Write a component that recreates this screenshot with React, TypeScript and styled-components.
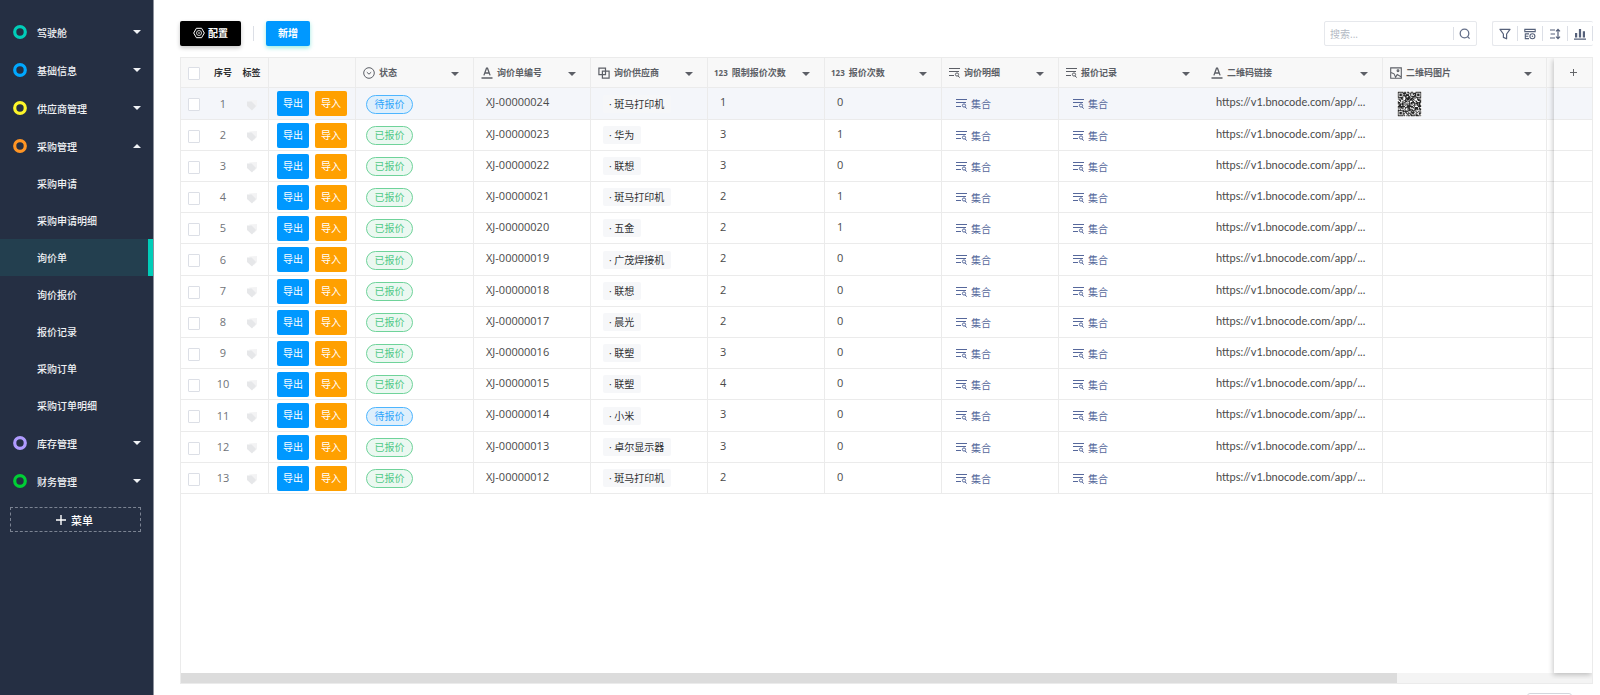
import React from "react";
import styled, { createGlobalStyle } from "styled-components";

const LINE = "#ebebeb";

const GlobalStyle = createGlobalStyle`
  *, *::before, *::after { box-sizing: border-box; }
  body {
    margin: 0;
    background: #fff;
    color: #4a4a4a;
    font-family: "Open Sans", "Noto Sans CJK SC", sans-serif;
    font-size: 10px;
  }
  button, input { font-family: inherit; }
`;

const Page = styled.div`
  display: flex;
  height: 100vh;
  overflow: hidden;
`;

/* ---------- sidebar ---------- */

const Sidebar = styled.nav`
  flex: 0 0 154px;
  padding-top: 13px;
  background: #252f43;
  border-right: 1px solid #8d929d;
  display: flex;
  flex-direction: column;
`;

const MenuItem = styled.a<{ $sub?: boolean; $active?: boolean }>`
  display: flex;
  align-items: center;
  height: ${(p) => (p.$sub ? 37 : 38)}px;
  padding: 0 12px 0 ${(p) => (p.$sub ? 37 : 13)}px;
  color: #f0f2f5;
  font-size: 10px;
  font-weight: 500;
  text-decoration: none;
  background: ${(p) => (p.$active ? "#233f4f" : "transparent")};
  box-shadow: ${(p) => (p.$active ? "inset -5px 0 0 #00cdb8" : "none")};
`;

const MenuLabel = styled.span`
  flex: 1;
`;

const RingIcon = styled.svg`
  width: 14px;
  height: 14px;
  margin-right: 10px;
`;

const AddMenu = styled.button`
  display: flex;
  align-items: center;
  justify-content: center;
  gap: 5px;
  height: 25px;
  margin: 7px 12px 0 10px;
  padding: 0 2px 0 0;
  border: 1px dashed #7b8392;
  background: none;
  color: #fff;
  font-size: 11px;
  font-weight: 500;
`;

/* ---------- toolbar ---------- */

const Main = styled.main`
  flex: 1;
  min-width: 0;
  display: flex;
  flex-direction: column;
  padding: 21px 7px 0 26px;
`;

const Toolbar = styled.div`
  display: flex;
  align-items: center;
  height: 25px;
  margin-bottom: 11px;
`;

const ToolbarButton = styled.button<{ $dark?: boolean }>`
  display: flex;
  align-items: center;
  justify-content: center;
  gap: 3px;
  height: 25px;
  padding: 0 ${(p) => (p.$dark ? 13 : 12)}px 2px;
  border: 0;
  border-radius: 2px;
  background: ${(p) => (p.$dark ? "#000" : "#0098ff")};
  box-shadow: 0 2px 4px ${(p) => (p.$dark ? "rgba(0,0,0,.22)" : "rgba(0,205,184,.4)")};
  color: #fff;
  font-size: 10px;
  font-weight: 700;
`;

const ToolbarRule = styled.span`
  width: 1px;
  height: 15px;
  margin: 0 12px;
  background: #dcdfe6;
`;

const SearchBox = styled.form`
  display: flex;
  align-items: center;
  width: 153px;
  height: 25px;
  margin: 0 15px 0 auto;
  border: 1px solid #e6e8ec;
  border-radius: 2px;
`;

const SearchInput = styled.input`
  flex: 1;
  min-width: 0;
  padding: 0 5px;
  border: 0;
  outline: 0;
  background: none;
  font-size: 10px;
  &::placeholder { color: #b4bac4; opacity: 1; }
`;

const SearchButton = styled.button`
  display: flex;
  align-items: center;
  justify-content: center;
  width: 23px;
  height: 13px;
  padding: 0;
  border: 0;
  border-left: 1px solid #dcdfe6;
  background: none;
  color: #65708a;
`;

const ToolGroup = styled.div`
  display: flex;
  align-items: center;
  height: 25px;
  border: 1px solid #e6e8ec;
  border-right: 0;
  border-radius: 2px;
`;

const ToolButton = styled.button`
  display: flex;
  align-items: center;
  justify-content: center;
  width: 25px;
  height: 15px;
  padding: 0;
  border: 0;
  border-right: 1px solid #dcdfe6;
  background: none;
  color: #56617a;
`;

/* ---------- grid ---------- */

const Grid = styled.section`
  flex: 1;
  min-height: 0;
  display: flex;
  flex-direction: column;
  border: 1px solid ${LINE};
`;

const GridBody = styled.div`
  flex: 1;
  min-height: 0;
  display: flex;
`;

const ScrollPane = styled.div`
  flex: 1;
  min-width: 0;
  overflow: hidden;
`;

const FixedPane = styled.div`
  position: relative;
  flex: 0 0 38px;
  background: #fff;
  box-shadow: -1px 2px 5px rgba(0, 0, 0, 0.22);
  clip-path: inset(0 0 -6px -8px);
`;

const Table = styled.table<{ $overflow?: number }>`
  width: calc(100% + ${(p) => p.$overflow ?? 0}px);
  table-layout: fixed;
  border-collapse: separate;
  border-spacing: 0;
`;

const HeadCell = styled.th<{ $rule?: boolean; $center?: boolean; $dark?: boolean }>`
  height: 30px;
  padding: 0 ${(p) => (p.$center ? 0 : 14)}px 0 ${(p) => (p.$center ? 0 : 7)}px;
  border-bottom: 1px solid ${LINE};
  border-right: ${(p) => (p.$rule ? `1px solid ${LINE}` : "0")};
  background: #f8f8f8;
  color: ${(p) => (p.$dark ? "#303133" : "#5c5f66")};
  font-size: 9px;
  font-weight: 700;
  text-align: ${(p) => (p.$center ? "center" : "left")};
  white-space: nowrap;
`;

const HeadContent = styled.div`
  display: flex;
  align-items: center;
  gap: 4px;
`;

const HeadLabel = styled.span`
  flex: 1;
`;

const HeadCaret = styled.span`
  display: flex;
  padding-top: 3px;
`;

const NumberMark = styled.span`
  margin-left: -1px;
  font-size: 8px;
`;

const Row = styled.tr<{ $hover?: boolean }>`
  height: 31px;
  background: ${(p) => (p.$hover ? "#f4f6fa" : "#fff")};
  &:nth-child(5n + 1) { height: 32px; }
`;

const Cell = styled.td<{ $rule?: boolean; $center?: boolean }>`
  padding: 0 0 0 ${(p) => (p.$center ? 0 : 12)}px;
  border-bottom: 1px solid ${LINE};
  border-right: ${(p) => (p.$rule ? `1px solid ${LINE}` : "0")};
  text-align: ${(p) => (p.$center ? "center" : "left")};
  white-space: nowrap;
`;

const ValueText = styled.div`
  padding-bottom: 3px;
  font-size: 11px;
  line-height: 16px;
`;

const LinkText = styled.a`
  display: block;
  padding-bottom: 3px;
  color: inherit;
  font-family: Lato, "Open Sans", sans-serif;
  font-size: 11px;
  line-height: 16px;
  text-decoration: none;
`;

const SeqText = styled.span`
  color: #707378;
  font-size: 11px;
  line-height: 16px;
`;

const Checkbox = styled.input`
  appearance: none;
  display: block;
  width: 12px;
  height: 13px;
  margin: 2px 0 0 7px;
  border: 1px solid #dcdfe6;
  border-radius: 1px;
  background: #fff;
`;

const TagIcon = styled.svg`
  display: block;
  width: 12px;
  height: 12px;
  margin: 2px auto 0;
`;

const ActionBar = styled.div`
  display: flex;
  gap: 6px;
  margin-left: -4px;
`;

const ActionButton = styled.button<{ $orange?: boolean }>`
  width: 32px;
  height: 25px;
  padding: 0 0 2px;
  border: 0;
  border-radius: 2px;
  background: ${(p) => (p.$orange ? "#ffa000" : "#0098ff")};
  color: #fff;
  font-size: 10px;
`;

const StatusPill = styled.span<{ $pending: boolean }>`
  display: block;
  width: 47px;
  height: 19px;
  margin: 1px 0 0 -2px;
  border: 1px solid ${(p) => (p.$pending ? "#4db5ff" : "#6fd39a")};
  border-radius: 10px;
  background: ${(p) => (p.$pending ? "#deeffc" : "#ebf8f1")};
  color: ${(p) => (p.$pending ? "#2fa5fb" : "#4fc986")};
  line-height: 17px;
  text-align: center;
`;

const SupplierChip = styled.span`
  display: inline-block;
  height: 18px;
  padding: 0 7px 0 6px;
  border-radius: 2px;
  background: #f6f7f9;
  color: #303133;
  line-height: 18px;
`;

const SetLink = styled.a`
  display: flex;
  align-items: center;
  gap: 4px;
  margin-left: 2px;
  color: #56689b;
  text-decoration: none;
`;

const QrImage = styled.svg`
  display: block;
  width: 25px;
  height: 26px;
  margin-left: 2px;
  background: #fff;
`;

const AddColumn = styled.button`
  display: block;
  margin: 0 auto;
  padding: 0;
  border: 0;
  background: none;
  color: #606266;
  line-height: 0;
`;

const ScrollTrack = styled.div`
  height: 10px;
  background: #f4f4f4;
`;

const ScrollThumb = styled.div`
  width: 86.2%;
  height: 10px;
  background: #dcdcdc;
`;

const Footer = styled.footer`
  flex: 0 0 11px;
  display: flex;
  justify-content: flex-end;
  padding: 9px 21px 0 0;
  overflow: hidden;
`;

const PagerBox = styled.div`
  width: 45px;
  height: 24px;
  border: 1px solid #d3d6dc;
  border-radius: 3px;
`;

/* ---------- icons ---------- */

const Caret = ({ up }: { up?: boolean }) => (
  <svg width="8" height="4" viewBox="0 0 8 4" aria-hidden="true">
    <path d={up ? "M0 4 4 0l4 4z" : "M0 0h8L4 4z"} fill="currentColor" />
  </svg>
);

const Plus = ({ size, weight }: { size: number; weight: number }) => (
  <svg width={size} height={size} viewBox="0 0 10 10" aria-hidden="true">
    <path d="M5 0v10M0 5h10" stroke="currentColor" strokeWidth={weight} />
  </svg>
);

const SettingsIcon = () => (
  <svg width="12" height="12" viewBox="0 0 12 12" fill="none" stroke="currentColor" aria-hidden="true">
    <path d="M3.4 1.3h5.2L11.3 6 8.6 10.7H3.4L.7 6z" strokeLinejoin="round" />
    <circle cx="6" cy="6" r="2.5" strokeWidth=".8" />
    <circle cx="6" cy="6" r=".8" fill="currentColor" stroke="none" />
  </svg>
);

const SearchIcon = () => (
  <svg width="12" height="12" viewBox="0 0 12 12" fill="none" stroke="currentColor" strokeWidth="1.3" aria-hidden="true">
    <circle cx="5.5" cy="5.5" r="4.3" />
    <path d="m8.6 8.6 2 2" />
  </svg>
);

const FilterIcon = () => (
  <svg width="12" height="12" viewBox="0 0 12 12" fill="none" stroke="currentColor" strokeWidth="1.2" strokeLinejoin="round" aria-hidden="true">
    <path d="M1 1.3h10L7.6 6v4.8L4.4 9.4V6z" />
  </svg>
);

const FieldsIcon = () => (
  <svg width="12" height="12" viewBox="0 0 12 12" fill="none" stroke="currentColor" strokeWidth="1.1" aria-hidden="true">
    <path d="M.8 1.4h10.4v2.2H.8zM1.3 5.6v5H5M1.3 5.9H5M1.3 8.3h3" />
    <circle cx="8.4" cy="8.3" r="2.5" />
    <circle cx="8.4" cy="8.3" r=".8" fill="currentColor" stroke="none" />
  </svg>
);

const SortIcon = () => (
  <svg width="12" height="12" viewBox="0 0 12 12" fill="none" stroke="currentColor" strokeWidth="1.2" aria-hidden="true">
    <path d="M1 2h5M1.6 6H6M1 10h5M9 1.4v9.2M7 3.4l2-2 2 2M7 8.6l2 2 2-2" />
  </svg>
);

const ChartIcon = () => (
  <svg width="12" height="12" viewBox="0 0 12 12" fill="currentColor" aria-hidden="true">
    <path d="M1 5h2.2v4.4H1zM4.9 1h2.2v8.4H4.9zM8.8 3.2H11v6.2H8.8zM0 10.6h12v1.2H0z" />
  </svg>
);

const SelectIcon = () => (
  <svg width="12" height="12" viewBox="0 0 12 12" fill="none" stroke="currentColor" aria-hidden="true">
    <circle cx="6" cy="6" r="5.3" />
    <path d="m3.8 5.2 2.2 2 2.2-2" />
  </svg>
);

const TextIcon = () => (
  <svg width="12" height="12" viewBox="0 0 12 12" fill="none" stroke="currentColor" strokeWidth="1.3" aria-hidden="true">
    <path d="M2.9 8.4 5.5 1.2h1l2.6 7.2M3.9 6h4.2M.5 11h11" />
  </svg>
);

const RelationIcon = () => (
  <svg width="12" height="12" viewBox="0 0 12 12" fill="none" stroke="currentColor" strokeWidth="1.2" aria-hidden="true">
    <path d="M4 7.6H.9V1.2h6.6V4M7.5 4.2h3.6v6.9H4.4V4.2z" />
    <path d="M7.5 4v3.6H4.2" />
  </svg>
);

const ListIcon = () => (
  <svg width="11" height="11" viewBox="0 0 11 11" fill="none" stroke="currentColor" aria-hidden="true">
    <path d="M0 1.5h11M0 4.5h10M0 8.5h5M9 9l1.8 1.6" />
    <circle cx="8" cy="7.5" r="1.6" />
  </svg>
);

const ImageIcon = () => (
  <svg width="12" height="12" viewBox="0 0 12 12" fill="none" stroke="currentColor" strokeWidth="1.1" aria-hidden="true">
    <path d="M.7.9h10.6v10.3H.7zM1 5.4l3 1.4 1.6 3.4 1.6-2.6 3.8 2.2" />
    <circle cx="8" cy="3.8" r=".9" />
  </svg>
);

const Tag = () => (
  <TagIcon viewBox="0 0 12 12" aria-hidden="true">
    <path d="M3 1.5 11 1v6L8 10z" fill="#f3f3f4" />
    <path d="M1 2.5h4.6L10 7l-4 4.6L1 7z" fill="#e6e7e9" />
  </TagIcon>
);

const QR_SIZE = 29;
const FINDERS = [[0, 0], [QR_SIZE - 7, 0], [0, QR_SIZE - 7]];

const qrPath = (() => {
  let seed = 20240;
  let d = "";
  for (let y = 0; y < QR_SIZE; y++) {
    for (let x = 0; x < QR_SIZE; x++) {
      seed = (seed * 1103515245 + 12345) % 2147483648;
      let on = seed / 2147483648 < 0.6;
      for (const [fx, fy] of FINDERS) {
        const dx = x - fx;
        const dy = y - fy;
        if (dx >= 0 && dx < 7 && dy >= 0 && dy < 7) {
          const ring = Math.max(Math.abs(dx - 3), Math.abs(dy - 3));
          on = ring !== 2;
        }
      }
      if (on) d += `M${x} ${y}h1v1h-1z`;
    }
  }
  return d;
})();

const QrCode = () => (
  <QrImage viewBox="-1 -1 31 31" preserveAspectRatio="none" role="img" aria-label="二维码">
    <path d={qrPath} fill="#262626" />
  </QrImage>
);

/* ---------- data ---------- */

interface MenuEntry {
  label: string;
  color?: string;
  open?: boolean;
  active?: boolean;
}

const menu: MenuEntry[] = [
  { label: "驾驶舱", color: "#00cdb8" },
  { label: "基础信息", color: "#00a8ff" },
  { label: "供应商管理", color: "#fdf52a" },
  { label: "采购管理", color: "#ff9524", open: true },
  { label: "采购申请" },
  { label: "采购申请明细" },
  { label: "询价单", active: true },
  { label: "询价报价" },
  { label: "报价记录" },
  { label: "采购订单" },
  { label: "采购订单明细" },
  { label: "库存管理", color: "#b09bff" },
  { label: "财务管理", color: "#00ce35" },
];

const columns: { label: string; icon: React.ReactNode; rule: boolean }[] = [
  { label: "状态", icon: <SelectIcon />, rule: true },
  { label: "询价单编号", icon: <TextIcon />, rule: true },
  { label: "询价供应商", icon: <RelationIcon />, rule: true },
  { label: "限制报价次数", icon: <NumberMark>123</NumberMark>, rule: true },
  { label: "报价次数", icon: <NumberMark>123</NumberMark>, rule: true },
  { label: "询价明细", icon: <ListIcon />, rule: true },
  { label: "报价记录", icon: <ListIcon />, rule: false },
  { label: "二维码链接", icon: <TextIcon />, rule: true },
  { label: "二维码图片", icon: <ImageIcon />, rule: true },
];

const columnWidths = [30, 24, 34, 87, 118, 117, 117, 117, 117, 117, 145, 179, undefined, 117];

const quotes: { supplier: string; limit: number; count: number; pending?: boolean }[] = [
  { supplier: "斑马打印机", limit: 1, count: 0, pending: true },
  { supplier: "华为", limit: 3, count: 1 },
  { supplier: "联想", limit: 3, count: 0 },
  { supplier: "斑马打印机", limit: 2, count: 1 },
  { supplier: "五金", limit: 2, count: 1 },
  { supplier: "广茂焊接机", limit: 2, count: 0 },
  { supplier: "联想", limit: 2, count: 0 },
  { supplier: "晨光", limit: 2, count: 0 },
  { supplier: "联塑", limit: 3, count: 0 },
  { supplier: "联塑", limit: 4, count: 0 },
  { supplier: "小米", limit: 3, count: 0, pending: true },
  { supplier: "卓尔显示器", limit: 3, count: 0 },
  { supplier: "斑马打印机", limit: 2, count: 0 },
];

/* ---------- view ---------- */

const SideMenu = () => (
  <Sidebar>
    {menu.map((m) => (
      <MenuItem key={m.label} href="#" $sub={!m.color} $active={m.active}>
        {m.color && (
          <RingIcon viewBox="0 0 14 14" aria-hidden="true">
            <circle cx="7" cy="7" r="5.3" fill="none" stroke={m.color} strokeWidth="3.2" />
          </RingIcon>
        )}
        <MenuLabel>{m.label}</MenuLabel>
        {m.color && <Caret up={m.open} />}
      </MenuItem>
    ))}
    <AddMenu type="button">
      <Plus size={10} weight={1.4} />
      菜单
    </AddMenu>
  </Sidebar>
);

const QuoteTable = () => (
  <Table $overflow={110}>
    <colgroup>
      {columnWidths.map((w, i) => (
        <col key={i} width={w} />
      ))}
    </colgroup>
    <thead>
      <tr>
        <HeadCell $center>
          <Checkbox type="checkbox" aria-label="全选" />
        </HeadCell>
        <HeadCell $center $dark>序号</HeadCell>
        <HeadCell $center $dark $rule>标签</HeadCell>
        <HeadCell $rule />
        {columns.map((c) => (
          <HeadCell key={c.label} $rule={c.rule}>
            <HeadContent>
              {c.icon}
              <HeadLabel>{c.label}</HeadLabel>
              <HeadCaret><Caret /></HeadCaret>
            </HeadContent>
          </HeadCell>
        ))}
        <HeadCell>
          <SelectIcon />
        </HeadCell>
      </tr>
    </thead>
    <tbody>
      {quotes.map((q, i) => (
        <Row key={i} $hover={i === 0}>
          <Cell $center>
            <Checkbox type="checkbox" aria-label={`选择 ${i + 1}`} />
          </Cell>
          <Cell $center><SeqText>{i + 1}</SeqText></Cell>
          <Cell $center $rule><Tag /></Cell>
          <Cell $rule>
            <ActionBar>
              <ActionButton type="button">导出</ActionButton>
              <ActionButton type="button" $orange>导入</ActionButton>
            </ActionBar>
          </Cell>
          <Cell $rule>
            <StatusPill $pending={!!q.pending}>{q.pending ? "待报价" : "已报价"}</StatusPill>
          </Cell>
          <Cell $rule><ValueText>XJ-000000{24 - i}</ValueText></Cell>
          <Cell $rule><SupplierChip>· {q.supplier}</SupplierChip></Cell>
          <Cell $rule><ValueText>{q.limit}</ValueText></Cell>
          <Cell $rule><ValueText>{q.count}</ValueText></Cell>
          <Cell $rule><SetLink href="#"><ListIcon />集合</SetLink></Cell>
          <Cell><SetLink href="#"><ListIcon />集合</SetLink></Cell>
          <Cell $rule><LinkText href="#">https://v1.bnocode.com/app/...</LinkText></Cell>
          <Cell $rule>{i === 0 && <QrCode />}</Cell>
          <Cell />
        </Row>
      ))}
    </tbody>
  </Table>
);

export default function App() {
  return (
    <Page>
      <GlobalStyle />
      <SideMenu />
      <Main>
        <Toolbar>
          <ToolbarButton type="button" $dark><SettingsIcon />配置</ToolbarButton>
          <ToolbarRule />
          <ToolbarButton type="button">新增</ToolbarButton>
          <SearchBox>
            <SearchInput type="text" placeholder="搜索..." aria-label="搜索" />
            <SearchButton type="button" aria-label="搜索"><SearchIcon /></SearchButton>
          </SearchBox>
          <ToolGroup>
            <ToolButton type="button" aria-label="筛选"><FilterIcon /></ToolButton>
            <ToolButton type="button" aria-label="字段"><FieldsIcon /></ToolButton>
            <ToolButton type="button" aria-label="排序"><SortIcon /></ToolButton>
            <ToolButton type="button" aria-label="图表"><ChartIcon /></ToolButton>
          </ToolGroup>
        </Toolbar>
        <Grid>
          <GridBody>
            <ScrollPane>
              <QuoteTable />
            </ScrollPane>
            <FixedPane>
              <Table>
                <thead>
                  <tr>
                    <HeadCell $center>
                      <AddColumn type="button" aria-label="添加列"><Plus size={7} weight={1.4} /></AddColumn>
                    </HeadCell>
                  </tr>
                </thead>
                <tbody>
                  {quotes.map((_, i) => (
                    <Row key={i} $hover={i === 0}>
                      <Cell />
                    </Row>
                  ))}
                </tbody>
              </Table>
            </FixedPane>
          </GridBody>
          <ScrollTrack><ScrollThumb /></ScrollTrack>
        </Grid>
        <Footer><PagerBox /></Footer>
      </Main>
    </Page>
  );
}
